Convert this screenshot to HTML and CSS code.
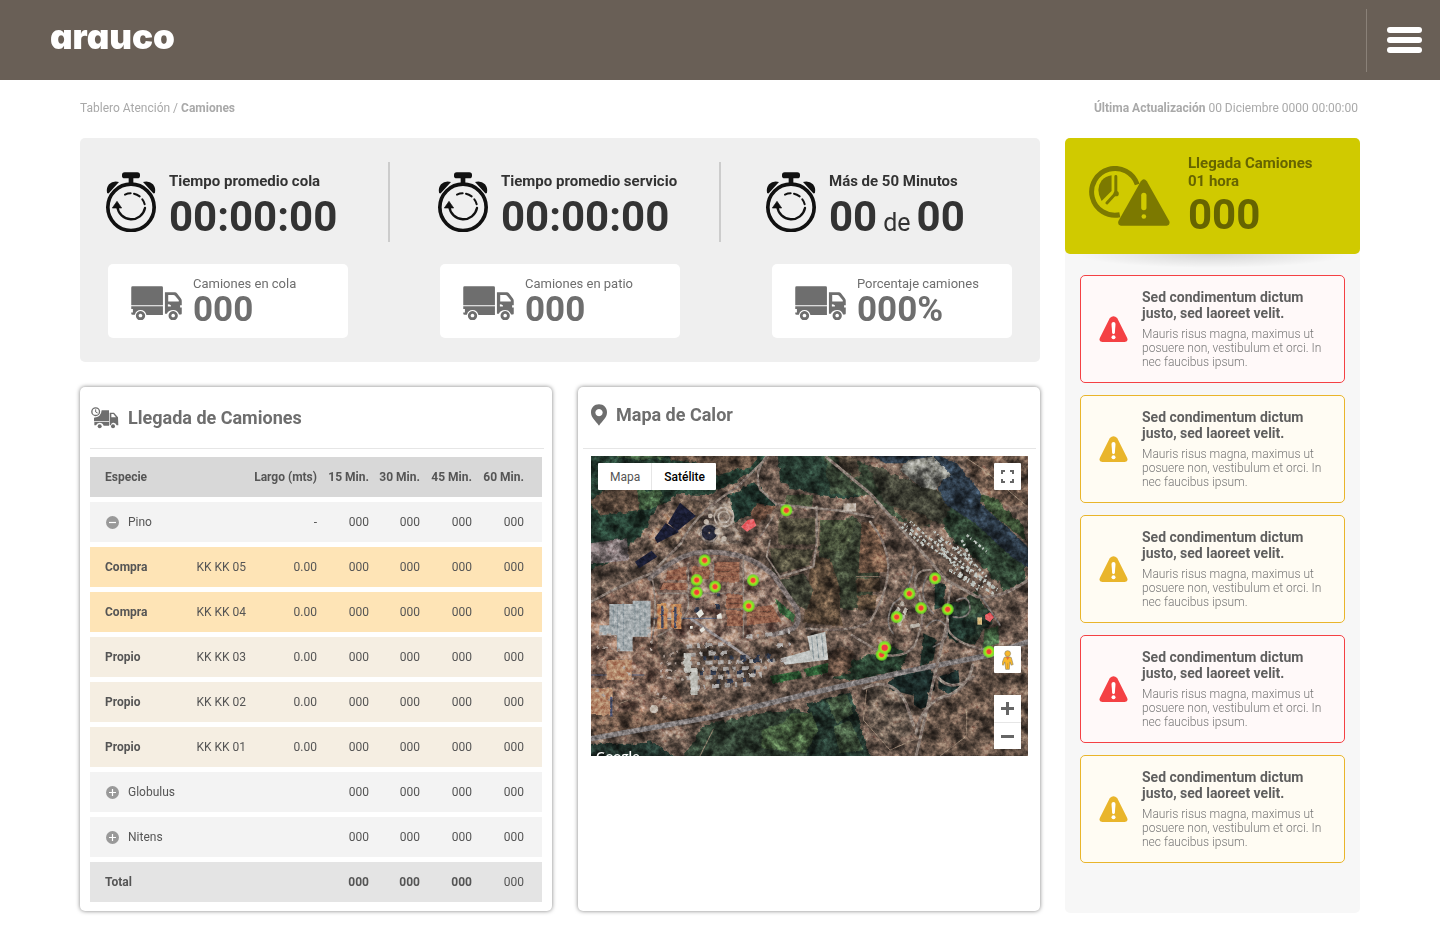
FILE: index.html
```html
<!DOCTYPE html>
<html lang="es">
<head>
<meta charset="utf-8">
<meta name="viewport" content="width=device-width, initial-scale=1">
<title>Tablero Atención - Camiones</title>
<link rel="stylesheet" href="styles.css">
</head>
<body>
<svg class="defs" aria-hidden="true">
  <symbol id="stopwatch" viewBox="78 110 150 180">
    <rect x="126" y="111" width="54" height="18" rx="8"/>
    <path d="M146 126h14v18h-14z"/>
    <path d="M81 172q-3-14 6-25 12-12 30-7L89 171q-4 6-8 1zM225 172q3-14-6-25-12-12-30-7l28 31q4 6 8 1z"/>
    <circle cx="153" cy="216" r="69.500" fill="none" stroke="currentColor" stroke-width="11"/>
    <path d="M112 214a42 42 0 0 0 83 4" fill="none" stroke="currentColor" stroke-width="7" stroke-linecap="round"/>
    <path d="M111 198l14 20H97z" stroke="currentColor" stroke-width="2" stroke-linejoin="round"/>
    <path d="M135 178q8-4 17-4M162 175q9 2 17 8M187 192q5 6 7 15" fill="none" stroke="currentColor" stroke-width="6" stroke-linecap="round"/>
  </symbol>
  <symbol id="truck" viewBox="153 452 153 103">
    <path d="M157 453h88q4 0 4 4v53h-96v-53q0-4 4-4z"/>
    <path d="M153 513h96v27h-50q-4-15-18-15-13 0-17 14h-7q-4 0-4-4v-3h5v-10h-5z"/>
    <path fill-rule="evenodd" d="M255 471h30q4 0 7 4l11 14q3 4 3 8v13h-5v7h5v18q0 3-3 3h-5q-5-13-18-13-14 0-19 11h-6zM265 479v20h32v-4l-12-14q-2-2-4-2zM264 507v7h9v-4q-4-3-9-3z"/>
    <path fill-rule="evenodd" d="M181 528a14 14 0 1 0 .1 0zM181 536a5.500 5.500 0 1 1-.1 0zM280 528a14 14 0 1 0 .1 0zM280 536a5.500 5.500 0 1 1-.1 0z"/>
  </symbol>
  <symbol id="warning" viewBox="116 196 86 78">
    <path d="M148 202q11-11 22 0l30 60q4 11-7 12h-68q-11-1-7-12z"/>
    <path d="M153 220q0-6 6-6t6 6l-2 28q-4 5-8 0z" fill="#fff"/>
    <circle cx="159" cy="260" r="6" fill="#fff"/>
  </symbol>
  <symbol id="plus" viewBox="0 0 13 13">
    <circle cx="6.500" cy="6.500" r="6.500"/><path d="M3 6.500h7M6.500 3v7" stroke="#fff" stroke-width="1.200"/>
  </symbol>
  <symbol id="minus" viewBox="0 0 13 13">
    <circle cx="6.500" cy="6.500" r="6.500"/><path d="M3 6.500h7" stroke="#fff" stroke-width="1.200"/>
  </symbol>
</svg>

<header class="topbar">
  <a class="logo" href="#">arauco</a>
  <div class="topbar-menu">
    <button class="hamburger" type="button" aria-label="Menú"><span></span><span></span><span></span></button>
  </div>
</header>

<div class="page">
  <div class="infobar">
    <nav aria-label="Ruta">Tablero Atención / <b>Camiones</b></nav>
    <p><b>Última Actualización</b> 00 Diciembre 0000 00:00:00</p>
  </div>

  <div class="layout">
    <main class="main">
      <section class="summary">
        <div class="metrics">
          <div class="metric">
            <svg class="stopwatch"><use href="#stopwatch"/></svg>
            <div><h2>Tiempo promedio cola</h2><p class="figure">00:00:00</p></div>
          </div>
          <div class="metric">
            <svg class="stopwatch"><use href="#stopwatch"/></svg>
            <div><h2>Tiempo promedio servicio</h2><p class="figure">00:00:00</p></div>
          </div>
          <div class="metric">
            <svg class="stopwatch"><use href="#stopwatch"/></svg>
            <div><h2>Más de 50 Minutos</h2><p class="figure"><span>00</span> <small>de</small> <span>00</span></p></div>
          </div>
        </div>
        <div class="counts">
          <div class="count">
            <svg class="truck"><use href="#truck"/></svg>
            <div><h3>Camiones en cola</h3><p>000</p></div>
          </div>
          <div class="count">
            <svg class="truck"><use href="#truck"/></svg>
            <div><h3>Camiones en patio</h3><p>000</p></div>
          </div>
          <div class="count">
            <svg class="truck"><use href="#truck"/></svg>
            <div><h3>Porcentaje camiones</h3><p>000%</p></div>
          </div>
        </div>
      </section>

      <div class="panels">
        <section class="panel">
          <h2 class="panel-title arrivals-title">
            <svg class="arrival-icon" viewBox="44 80 84 66" aria-hidden="true">
              <circle cx="58" cy="94" r="11.500" fill="none" stroke="currentColor" stroke-width="4"/>
              <path d="M58 87v8l6 3" fill="none" stroke="currentColor" stroke-width="3"/>
              <path d="M76 90h22v33H53v-11q21 0 23-22z"/>
              <path d="M54 125h44v11H82q-3-9-12-9-8 0-11 8h-5z"/>
              <path fill-rule="evenodd" d="M100 97h13l12 14 1 24h-5q-3-9-11-8-5 0-7 8h-3zM105 101v10h14l-8-10z"/>
              <circle cx="70" cy="138" r="6"/><circle cx="110" cy="138" r="6"/>
            </svg>
            Llegada de Camiones
          </h2>
          <table class="arrivals">
            <colgroup><col class="c-kind"><col class="c-code"><col class="c-length"><col class="c-min"><col class="c-half"><col class="c-min"><col class="c-last"></colgroup>
            <thead>
              <tr><th class="left" colspan="2">Especie</th><th>Largo (mts)</th><th>15 Min.</th><th>30 Min.</th><th>45 Min.</th><th>60 Min.</th></tr>
            </thead>
            <tbody>
              <tr class="group"><td class="left" colspan="2"><button type="button" class="toggle" aria-expanded="true"><svg><use href="#minus"/></svg>Pino</button></td><td>-</td><td>000</td><td>000</td><td>000</td><td>000</td></tr>
              <tr class="buy"><th class="left">Compra</th><td>KK KK 05</td><td>0.00</td><td>000</td><td>000</td><td>000</td><td>000</td></tr>
              <tr class="buy"><th class="left">Compra</th><td>KK KK 04</td><td>0.00</td><td>000</td><td>000</td><td>000</td><td>000</td></tr>
              <tr class="own"><th class="left">Propio</th><td>KK KK 03</td><td>0.00</td><td>000</td><td>000</td><td>000</td><td>000</td></tr>
              <tr class="own"><th class="left">Propio</th><td>KK KK 02</td><td>0.00</td><td>000</td><td>000</td><td>000</td><td>000</td></tr>
              <tr class="own"><th class="left">Propio</th><td>KK KK 01</td><td>0.00</td><td>000</td><td>000</td><td>000</td><td>000</td></tr>
              <tr class="group"><td class="left" colspan="2"><button type="button" class="toggle" aria-expanded="false"><svg><use href="#plus"/></svg>Globulus</button></td><td></td><td>000</td><td>000</td><td>000</td><td>000</td></tr>
              <tr class="group"><td class="left" colspan="2"><button type="button" class="toggle" aria-expanded="false"><svg><use href="#plus"/></svg>Nitens</button></td><td></td><td>000</td><td>000</td><td>000</td><td>000</td></tr>
            </tbody>
            <tfoot>
              <tr><th class="left" colspan="2">Total</th><td></td><th>000</th><th>000</th><th>000</th><td>000</td></tr>
            </tfoot>
          </table>
        </section>

        <section class="panel">
          <h2 class="panel-title map-title">
            <svg class="pin" viewBox="33 71 48 64" aria-hidden="true"><path fill-rule="evenodd" d="M57 71c14 0 24 10 24 24 0 16-13 25-24 40-11-15-24-24-24-40 0-14 10-24 24-24zM57 85a11 11 0 1 0 .1 0z"/></svg>
            Mapa de Calor
          </h2>
          <div class="map">
            <svg class="satellite" viewBox="33 228 1311 900" preserveAspectRatio="xMidYMid slice" role="img" aria-label="Vista satelital con puntos de calor">
              <defs>
                <filter id="ragged" x="-5%" y="-5%" width="110%" height="110%"><feTurbulence type="fractalNoise" baseFrequency="0.04" numOctaves="3" seed="4"/><feDisplacementMap in="SourceGraphic" scale="34" xChannelSelector="R" yChannelSelector="G" color-interpolation-filters="sRGB"/></filter>
                <filter id="rough" color-interpolation-filters="sRGB" x="-5%" y="-5%" width="110%" height="110%"><feTurbulence type="fractalNoise" baseFrequency="0.06" numOctaves="2" seed="9"/><feDisplacementMap in="SourceGraphic" scale="9" xChannelSelector="R" yChannelSelector="G"/></filter>
                <filter id="grain" color-interpolation-filters="sRGB" x="0" y="0" width="100%" height="100%"><feTurbulence type="fractalNoise" baseFrequency="0.09" numOctaves="3" seed="7"/><feColorMatrix values="1.500 0 0 0 -.27  1.500 0 0 0 -.27  1.500 0 0 0 -.27  0 0 0 0 1"/></filter>
                <filter id="broad" color-interpolation-filters="sRGB" x="0" y="0" width="100%" height="100%"><feTurbulence type="fractalNoise" baseFrequency="0.025" numOctaves="3" seed="21"/><feColorMatrix values="1.800 0 0 0 -.42  1.800 0 0 0 -.42  1.800 0 0 0 -.42  0 0 0 0 1"/></filter>
                <radialGradient id="heat"><stop offset="0" stop-color="#f2333f"/><stop offset=".3" stop-color="#ee4a35"/><stop offset=".42" stop-color="#d8b325"/><stop offset=".6" stop-color="#86ea22"/><stop offset=".8" stop-color="#74e323" stop-opacity=".8"/><stop offset="1" stop-color="#6fd926" stop-opacity="0"/></radialGradient>
                <g id="spot"><circle r="20" fill="url(#heat)"/></g>
              </defs>
              <path fill="#6d5b50" d="M33 228h1311v900H33z"/>
              <g filter="url(#ragged)">
                <path fill="#233a2f" d="M0 200h580l-30 70-70 40-90 45-90-5-60 40-40 70-50 50-60 45-100 50z"/>
                <path fill="#5c4a3d" d="M280 228h270l-30 40-110 30-40-40-90-10zM33 370l70-40 100 5-20 65-110 15z"/>
                <path fill="#3d573b" d="M180 335l75 5 2 45-70 12zM110 228h160l-20 20-120-4z"/>
                <path fill="#1f342c" d="M453 350l80-35 35 35 35 30-60 30-50 15-35 15z"/>
                <path fill="#263a30" d="M600 210h140l90 70 20 80-100 0-60-12-80-30z"/>
                <path fill="#364333" d="M740 228l120 30 140 110 60 80-100-20-80-70-120-10z"/>
                <path fill="#594d40" d="M760 220l80 20 10 50-30 20zM930 330l100 40 40 60-40 30-80-60z"/>
                <path fill="#3e3f34" d="M870 260l80 30 130 50 70 60-20 60-120-60-90-20z"/>
                <path fill="#2e4232" d="M1130 350l50 20 120 90 44 70v80l-60 30-60-70-70-60-60-60z"/>
                <path fill="#705a4c" d="M1130 200h234v190l-110-10-50-50z"/>
                <path fill="#35472f" d="M1190 350l60 10 94 90v40l-80-60z"/>
                <path fill="#263b2c" d="M810 850l140-40 40 20-20 50-160 30zM780 870l60-5-20 40-50 0z"/>
                <path fill="#5a463a" d="M830 830l-40-20-50 20 10 70 60-10z"/>
                <path fill="#2f3e31" d="M380 1040l280-50 50 30 30 130-440 20z"/>
                <path fill="#22342c" d="M690 980l70-20 60-20 30 110 40 110H690z"/>
                <path fill="#20312b" d="M0 1100h160l60-10 120 80H0zM1200 1060l80-20 90 40v80h-190z"/>
                <path fill="#3a4232" d="M720 510l100-100 70 60 20 100-30 110-60 20-80-10z"/>
                <path fill="#2a3b30" d="M1100 690l50-20 80 20 20 30-60 80-70-20z"/>
              </g>
              <g filter="url(#rough)">
                <path fill="#7c7172" d="M30 490l110-15 8 66-118 12z"/>
                <path fill="#7b6657" d="M290 355l70 12 14 28-70 85-90 32-6-40z"/>
                <path fill="#84756a" d="M390 360l60-2 15 80 30 50-110 10-35-40z"/>
                <path fill="#887064" d="M240 600q10-60 120-85h110q90 30 110 80l60 140-160 60-160 0-100-50z"/>
                <path fill="#84695b" d="M33 670l170-80 30 50 0 170 90 180-100 30-190 50z"/>
                <path fill="#4d4a3a" d="M595 415h112v78H595zM570 505l130 5-10 45-110 30z"/>
                <path fill="#6d4f40" d="M530 370l60 10-60 60-20-40z"/>
                <path fill="#544334" d="M690 560l50 8 50 170-120-10z"/>
                <path fill="#684f3f" d="M845 425l60 10 20 140-90 5z"/>
                <path fill="#47503a" d="M718 420h112l-30 90-80 10zM620 345h80l-5 40-80-10z"/>
                <path fill="#594838" d="M705 530l45 5 30 90 0 100-90-15zM830 595h70v40h-70zM830 645l60 0-5 45-50 0z"/>
                <path fill="#3c3e32" d="M600 600l70-20 30 50-20 60-50-30z"/>
                <path fill="#37603a" d="M585 655l60 50-5 20-40-25z"/>
                <path fill="#2b3845" d="M870 225l190-5 70 30 74 90-4 30 90 80 64 60v60l-60-40-110-100-90-60-18-40 10-30-60-50-110 0z"/>
                <path fill="#7d7d77" d="M985 240l75-10 55 55-35 20-10 25-50-10-60-50z"/>
                <path fill="#6a5c51" d="M860 930l50-15 60 20 30 60-10 70-70 30-50-50z"/>
                <path fill="#665448" d="M1020 1010l130-80 60-40 134-30v270h-320z"/>
                <path fill="#41573a" d="M545 1050l60-20 30-30 60 0 20 50-40 70-130-15z"/>
                <path fill="#416040" d="M1215 745l40-5 2 50-50 15z"/>
                <path fill="#3f523c" d="M740 960l60-20 20 60-50 30zM760 1040l50-20 40 90-70 10z"/>
                <path fill="#2b5631" d="M570 888l90-16 6 22-90 16zM670 868l75-20-2 30-62 12z"/>
                <path fill="#725a4b" d="M33 1000l200-10 120-30 50 40-200 40-170 30z"/>
                <path fill="#1e3029" d="M1065 605l30 8-2 66-30 10zM1110 700l70 20 10 40-60 30-30-30zM1030 760l40 20-10 60-40 20z"/>
                <path fill="#1a2927" d="M925 910l20-20 100-25 15 15 5 50-50 20-80-20zM1075 890l60-20 5 50-30 25-35-20zM1002 945l40-8 5 40-25 10-20-12z"/>
                <path fill="#2a3a2b" d="M1160 650l30-20 25 60-50 20z"/>
              </g>
              <rect x="33" y="228" width="1311" height="900" filter="url(#broad)" class="texture strong"/>
              <g fill="#1a1d33"><path d="M300 368l48 40-56 45-28-23zM257 429l40 27-65 33-8-15z"/><path d="M165 545l50-33 17 18-55 35z"/></g>
              <g fill="none" stroke="#8d8078" stroke-linecap="round" stroke-linejoin="round">
                <path stroke-width="7" d="M33 665q90-50 180-85 60-60 90-90 40-90 170-170l90-90M560 228q-40 50-20 100l50 45 200 20 90 18M710 380v110l-10 70-100 30"/>
                <path stroke-width="15" stroke="#7d7371" d="M210 595q70-60 130-75 60-10 130 5 60 15 110 60l70 100q14 40-10 60l-60 20"/>
                <path stroke-width="5" d="M215 590q20 80 0 200M235 640h250l-3 90M325 550v90M400 545v90M490 530v240M230 770q120-60 90-130M580 410l-40 60M570 480l-10 50 40 60"/>
                <path stroke-width="9" d="M740 232l130 108 230 260 90 50q70 10 154-50"/>
                <path stroke-width="7" d="M870 425q50 60 55 130 0 80-55 170-60 35-190 20M815 765l100 60q60 10 90-30l20-60q10-60-20-120 0-50 50-45M1115 610q-20 80-10 140 20 40 110 60"/>
                <path stroke-width="5" stroke="#7d7774" d="M1040 590q-30 60 20 110M1130 660q40-20 40 30-10 30-50 20M1040 740q30-40 60 0 10 40-40 60M1200 645l60 90M1000 560q-10 80-60 110-30 60 0 90"/>
                <path stroke-width="16" stroke="#807b7b" d="M33 1076q200-36 367-66l290-70 300-68 230-45 124-42"/>
                <path stroke-width="9" d="M1103 720l-35 150-60 258M1008 1060q20-100 100-115 60-30 70-90M1060 870q40 80 120 20M850 925q90-40 130 50l20 60"/>
                <path stroke-width="3" stroke="#93806f" d="M120 970l80-30 130 50M360 1128l40-80M1080 1128l80-60v-80M860 930l-10 90 80 90 70-30M1150 228l60 40 130 110M830 590h70M720 410l-10 110"/>
              </g>
              <g fill="none"><path stroke-width="8" d="M330 715l180 120" stroke="#9b9597"/><path stroke="#56617a" stroke-width="3" d="M220 715h190M33 885h160"/></g>
              <g filter="url(#rough)">
                <g fill="#95634e"><path d="M262 575l58-18v42h-68zM335 560h52v38h-52zM403 545l75 2v58h-75zM250 608h70v22h-80zM438 643h50v42h-50zM440 690h50v48h-50zM500 685l75-10 30 50-105 10z"/></g>
                <g stroke="#6d4b40" stroke-width="2"><path d="M265 585h50M340 575h40M410 560h65M410 575h65M410 590h65M445 655h40M445 670h40M445 705h40M510 695h65M510 710h80"/></g>
                <g fill="#c48a5a"><path d="M232 672h30v75h-30zM274 672h30v75h-30z"/><path fill="#b3886b" d="M80 840h75v60H80zM33 925h65v80H33z"/></g>
                <path d="M247 680v65M286 680v65M94 950v60" stroke="#444c69" stroke-width="7"/>
              </g>
              <g fill="#a6adb0"><path d="M88 672h70v-10h54v108h-54v44h-46v-48H58v-30h30z"/><path fill="#c3c6c4" d="M603 835l87-24-8-42 54-14 9 84-130 15z"/></g>
              <path d="M100 680v60M112 680v130M130 670v140M165 668v100M180 668v100M195 668v100M695 772l6 66M710 768l6 66M725 764l6 66" stroke="#8f9b9f" stroke-width="3"/>
              <g filter="url(#rough)" fill="none">
                <g stroke="#aba7a5" stroke-width="12"><path stroke-dasharray="17 14 7 18 22 16" d="M320 800l140-10M330 825l120-8M320 850l300-10M335 870l230-8M320 895l240-12M340 922l180-10M500 770l130-14M592 796l50-4"/></g>
                <g stroke="#2f384b" stroke-width="12"><path stroke-dasharray="9 23 16 31" d="M370 835l200-6M360 880l190-6M410 905l100-6M352 650v60M414 640v55M490 840h110"/></g>
                <path stroke="#c0c0ba" stroke-width="22" d="M342 865v80M322 820v55"/>
                <path stroke="#aea098" stroke-width="7" stroke-dasharray="8 12 14 10 5 15" d="M250 830l60-20M240 850l80 0M240 870l70 5M240 890l80 10M60 760l60 10M50 800l70 10M130 860l40 50M50 930l50 40M230 940l60 30M205 740l10 80"/>
                <g stroke="#bfc5c0" stroke-width="8"><path stroke-dasharray="8 6 5 9 12 7" d="M970 430l110 90 180 115M990 425l90 75 160 120M965 440l70 60M1060 455l50 40 70 60M1090 520l60 70 90 50M1130 500l90 90M1160 465l60 50M1110 570l90 60M1145 480l30 60M1080 480l20 50"/></g>
                <path stroke="#b8b2a8" stroke-width="11" stroke-dasharray="34 5" d="M940 710l30-45M955 735l25-50M990 740l30-6"/>
              </g>
              <g fill="none" stroke="#b8ada3" stroke-width="5"><circle cx="432" cy="411" r="29"/><circle cx="432" cy="411" r="17"/><circle cx="388" cy="458" r="26" stroke="#8f8681"/><circle cx="388" cy="458" r="13" stroke="#262839" stroke-width="20"/></g>
              <g fill="#c1b6ab"><circle cx="379" cy="425" r="8"/><circle cx="391" cy="408" r="7"/><circle cx="412" cy="455" r="9"/><circle cx="432" cy="476" r="8"/><circle cx="222" cy="987" r="13"/><path d="M790 370h38v24h-38z"/></g>
              <path fill="#e8656a" d="M483 440l20-20 18-3 8 20-28 18zM1215 705l15-8 12 15-12 14-14-8z"/><path fill="#dcc08a" d="M1192 712h14v22h-14z"/>
              <path fill="#e6e6df" d="M348 700l16-12 8 14-14 12zM410 706l14-8 2 18h-14zM358 750l12-10 6 10-12 8zM330 738h8v8h-8z"/>
              <rect x="33" y="228" width="1311" height="900" filter="url(#grain)" class="texture"/>
              <use href="#spot" x="619" y="391"/><use href="#spot" x="374" y="541"/><use href="#spot" x="350" y="600"/><use href="#spot" x="405" y="620"/><use href="#spot" x="350" y="637"/><use href="#spot" x="519" y="601"/><use href="#spot" x="506" y="678"/>
              <use href="#spot" x="1065" y="595"/><use href="#spot" x="988" y="641"/><use href="#spot" x="1023" y="684"/><use href="#spot" x="1103" y="688"/><use href="#spot" x="950" y="711"/><use href="#spot" x="905" y="824"/><circle cx="914" cy="803" r="22" fill="url(#heat)"/><circle cx="914" cy="803" r="9" fill="#ef3846"/><use href="#spot" x="1227" y="815"/>
            </svg>
            <div class="map-types"><button type="button">Mapa</button><button type="button" class="active">Satélite</button></div>
            <button type="button" class="map-button fullscreen" aria-label="Pantalla completa"><svg viewBox="0 0 13 13"><path d="M1 4V1h3M9 1h3v3M12 9v3H9M4 12H1V9" fill="none" stroke="#666" stroke-width="2"/></svg></button>
            <div class="map-tools">
              <button type="button" class="map-button" aria-label="Street View"><svg class="pegman" viewBox="574 809 36 62"><g fill="#f9b82b" stroke="#8f8465" stroke-width="2"><path d="M580 832q10-6 22 0l6 22-6 2-4-10-2 23h-11l-3-23-4 10-6-2z"/><circle cx="591" cy="820" r="9"/></g><path d="M585 831l6 9 6-9z" fill="#e3703a"/><path d="M591 850v17" stroke="#c98a1e" stroke-width="2"/></svg></button>
              <div class="zoom"><button type="button" class="map-button" aria-label="Acercar"><svg viewBox="0 0 13 13"><path d="M0 6.500h13M6.500 0v13" stroke="#666" stroke-width="3"/></svg></button><button type="button" class="map-button" aria-label="Alejar"><svg viewBox="0 0 13 13"><path d="M0 6.500h13" stroke="#666" stroke-width="3"/></svg></button></div>
            </div>
            <span class="credit">Google</span>
          </div>
        </section>
      </div>
    </main>

    <aside class="side">
      <section class="hour">
        <svg class="hour-icon" viewBox="86 497 245 182" aria-hidden="true">
          <path d="M179 645a71 71 0 1 1 53-92" fill="none" stroke="currentColor" stroke-width="15"/>
          <path d="M154 525v48l-30 30q-20-35 0-62 12-13 30-16z"/>
          <path d="M167 529v51l-27 29" fill="none" stroke="currentColor" stroke-width="9" stroke-linecap="round" stroke-linejoin="round"/><circle cx="168" cy="581" r="8"/>
          <path d="M243 543q9-12 18 0l68 121q4 12-7 14H182q-11-2-7-14z"/>
          <path d="M252 586v37" stroke="#d0ca00" stroke-width="16" stroke-linecap="round"/><circle cx="252" cy="650" r="7" fill="#d0ca00"/>
        </svg>
        <div><h2>Llegada Camiones<br>01 hora</h2><p>000</p></div>
      </section>
      <ul class="alerts">
        <li class="alert danger"><svg><use href="#warning"/></svg><div><h3>Sed condimentum dictum justo, sed laoreet velit.</h3><p>Mauris risus magna, maximus ut posuere non, vestibulum et orci. In nec faucibus ipsum.</p></div></li>
        <li class="alert"><svg><use href="#warning"/></svg><div><h3>Sed condimentum dictum justo, sed laoreet velit.</h3><p>Mauris risus magna, maximus ut posuere non, vestibulum et orci. In nec faucibus ipsum.</p></div></li>
        <li class="alert"><svg><use href="#warning"/></svg><div><h3>Sed condimentum dictum justo, sed laoreet velit.</h3><p>Mauris risus magna, maximus ut posuere non, vestibulum et orci. In nec faucibus ipsum.</p></div></li>
        <li class="alert danger"><svg><use href="#warning"/></svg><div><h3>Sed condimentum dictum justo, sed laoreet velit.</h3><p>Mauris risus magna, maximus ut posuere non, vestibulum et orci. In nec faucibus ipsum.</p></div></li>
        <li class="alert"><svg><use href="#warning"/></svg><div><h3>Sed condimentum dictum justo, sed laoreet velit.</h3><p>Mauris risus magna, maximus ut posuere non, vestibulum et orci. In nec faucibus ipsum.</p></div></li>
      </ul>
    </aside>
  </div>
</div>
</body>
</html>
```

FILE: styles.css
```css
* { box-sizing: border-box; }

body {
  margin: 0;
  background: #fff;
  color: #555;
  font: 12px/16px Roboto, "Liberation Sans", sans-serif;
}

h2, h3, p, ul { margin: 0; padding: 0; }
button { border: 0; padding: 0; background: none; color: inherit; font: inherit; cursor: pointer; }
svg { display: block; fill: currentColor; flex: none; }
.defs { position: absolute; width: 0; height: 0; }

.topbar {
  display: flex;
  justify-content: space-between;
  height: 80px;
  padding: 9px 18px 8px 50px;
  background: #695f56;
}
.logo {
  color: #fff;
  font: 900 35px/54px Inter, sans-serif;
  font-feature-settings: "cv11";
  text-decoration: none;
}
.topbar-menu {
  display: flex;
  align-items: center;
  padding: 0 0 1px 20px;
  border-left: 1px solid #8a8178;
}
.hamburger { display: grid; gap: 4px; width: 35px; }
.hamburger span { height: 6px; border-radius: 3px; background: #fff; }

.page { padding: 20px 80px 24px; }
.infobar {
  display: flex;
  justify-content: space-between;
  padding-right: 2px;
  margin-bottom: 22px;
  color: #a9a9a9;
}

.layout { display: grid; grid-template-columns: minmax(0, 1fr) 295px; gap: 25px; }
.main { display: flex; flex-direction: column; gap: 25px; padding-bottom: 2px; }

.summary { padding: 24px 0; border-radius: 5px; background: #efefef; }
.metrics { display: grid; grid-template-columns: 310fr 331fr 319fr; }
.metric {
  display: flex;
  gap: 13px;
  padding: 10px 0 0 48px;
  border-right: 2px solid #ccc;
  color: #333;
}
.metric:first-child { padding-left: 26px; }
.metric:last-child { padding-left: 45px; border: 0; }
.metric h2 { font-size: 15px; line-height: 18px; }
.stopwatch { width: 50px; height: 60px; color: #111; }
.figure {
  display: flex;
  align-items: baseline;
  gap: 6px;
  height: 52px;
  font-size: 42px;
  font-weight: 700;
  line-height: 54px;
  white-space: nowrap;
}
.figure small { font-size: 25px; font-weight: 400; }
.counts {
  display: flex;
  justify-content: space-between;
  padding: 22px 28px 0;
}
.count {
  display: flex;
  gap: 11px;
  width: 240px;
  padding: 11px 0 11px 23px;
  border-radius: 5px;
  background: #fff;
  color: #6e6e6e;
}
.truck { width: 51px; height: 34px; margin-top: 11px; }
.count h3 { font-size: 13px; font-weight: 400; line-height: 18px; }
.count p { font-size: 35px; font-weight: 700; line-height: 34px; }

.panels { display: grid; grid-template-columns: 472fr 462fr; gap: 26px; flex: 1; }
.panel {
  padding: 0 8px 4px 10px;
  border-radius: 5px;
  background: #fff;
  box-shadow: 0 0 4px rgba(0, 0, 0, .5);
}
.panel + .panel { padding: 0 4px 0 5px; }
.panel-title {
  display: flex;
  align-items: center;
  height: 62px;
  border-bottom: 1px solid #e6e6e6;
  color: #6e6e6e;
  font-size: 18px;
  line-height: 22px;
}
.arrivals-title { gap: 9px; padding-left: 1px; }
.map-title { gap: 9px; padding: 0 0 6px 8px; }
.arrival-icon { width: 28px; height: 22px; }
.pin { width: 16px; height: 22px; }

.arrivals {
  width: calc(100% - 2px);
  margin-top: 3px;
  border-spacing: 0 5px;
  table-layout: fixed;
}
.c-kind { width: 106px; }
.c-code { width: 50px; }
.c-length { width: 71px; }
.c-min { width: 52px; }
.c-half { width: 51px; }
.c-last { width: 70px; }
.arrivals th, .arrivals td { height: 40px; padding: 0; text-align: right; white-space: nowrap; }
.arrivals th:last-child, .arrivals td:last-child { padding-right: 18px; }
.arrivals .left { padding-left: 15px; text-align: left; }
.arrivals thead { background: #d8d8d8; }
.arrivals .group { background: #f3f3f3; }
.arrivals .buy { background: #fee4b6; }
.arrivals .own { background: #f5eee2; }
.arrivals tfoot { background: #e4e4e4; }
.toggle { display: flex; align-items: center; gap: 9px; }
.toggle svg { width: 13px; height: 13px; margin-left: 1px; color: #999; }

.map { position: relative; height: 300px; margin: 7px 8px 0; overflow: hidden; }
.satellite { width: 100%; height: 100%; }
.texture { mix-blend-mode: overlay; opacity: .4; }
.strong { opacity: .6; }
.map-types {
  position: absolute;
  left: 7px;
  top: 7px;
  display: flex;
  height: 27px;
  border-radius: 1px;
  background: #fff;
}
.map-types button { padding: 0 11px 0 12px; }
.map-types .active { border-left: 1px solid #e6e6e6; color: #000; font-weight: 500; }
.map-button {
  display: grid;
  place-items: center;
  width: 27px;
  height: 27px;
  border-radius: 1px;
  background: #fff;
}
.map-button svg { width: 13px; height: 13px; }
.map-button .pegman { width: 12px; height: 20px; }
.fullscreen { position: absolute; right: 7px; top: 7px; }
.map-tools { position: absolute; right: 7px; bottom: 7px; display: grid; gap: 22px; }
.zoom { background: #fff; }
.zoom button + button { border-top: 1px solid #e6e6e6; }
.credit {
  position: absolute;
  left: 5px;
  bottom: -9px;
  color: #fff;
  font: 600 13px/18px "Open Sans", sans-serif;
}

.side { border-radius: 5px; background: #f7f7f7; }
.hour {
  position: relative;
  display: flex;
  gap: 18px;
  height: 116px;
  padding: 16px 24px;
  border-radius: 5px;
  background: #d0ca00;
  color: #666400;
}
.hour::after {
  content: "";
  position: absolute;
  left: 10px;
  right: 10px;
  top: 100%;
  height: 14px;
  background: radial-gradient(ellipse at top, rgba(0, 0, 0, .14), transparent 70%);
}
.hour-icon { width: 81px; height: 60px; margin-top: 12px; color: #7c7900; }
.hour h2 { font-size: 15px; line-height: 18px; }
.hour p { font-size: 42px; font-weight: 700; line-height: 50px; }

.alerts { display: grid; gap: 12px; padding: 21px 15px 50px; list-style: none; }
.alert {
  display: flex;
  gap: 14px;
  height: 108px;
  padding: 13px 12px 0 18px;
  border: 1px solid #e9b52b;
  border-radius: 5px;
  background: #fffcf3;
}
.danger { border-color: #f44144; background: #fff9f9; }
.alert svg { width: 29px; height: 26px; margin-top: 27px; color: #e9b52b; }
.danger svg { color: #f44144; }
.alert h3 { margin-bottom: 6px; color: #5f5f5f; font-size: 14px; line-height: 16px; }
.alert p { color: #777; font-weight: 300; line-height: 14px; }
```
